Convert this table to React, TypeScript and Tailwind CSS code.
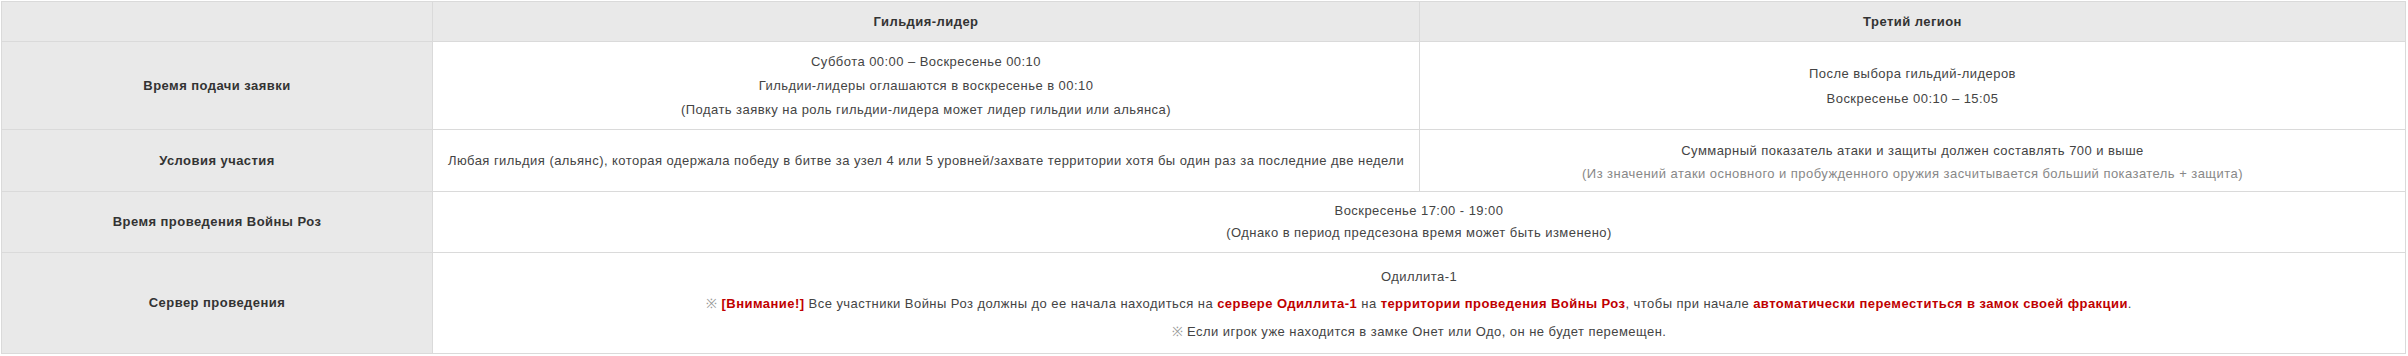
import React from "react";

const font = { fontFamily: '"Liberation Sans", Arial, sans-serif' };

function Label({ children }: { children: React.ReactNode }) {
  return (
    <div className="flex items-center justify-center border-l border-t border-[#dadada] bg-[#e9e9e9] text-[13px] font-bold tracking-[0.45px] text-[#333]">
      {children}
    </div>
  );
}

function Cell({
  children,
  className = "",
}: {
  children: React.ReactNode;
  className?: string;
}) {
  return (
    <div
      className={`flex flex-col items-center justify-center border-l border-t border-[#dadada] bg-white text-center text-[13px] tracking-[0.45px] text-[#444] ${className}`}
    >
      {children}
    </div>
  );
}

const R = ({ children }: { children: React.ReactNode }) => (
  <b className="font-bold text-[#c00000]">{children}</b>
);

export default function App() {
  return (
    <div className="min-h-[356px] w-[2408px] bg-white pl-px pt-px" style={font}>
      <div className="grid w-[2405px] grid-cols-[431px_987px_986px] grid-rows-[40px_88px_62px_61px_101px] border-b border-r border-[#dadada]">
        {/* header */}
        <Label>{""}</Label>
        <Label>Гильдия-лидер</Label>
        <Label>Третий легион</Label>

        {/* row 1 */}
        <Label>Время подачи заявки</Label>
        <Cell className="leading-[24px]">
          <div>Суббота 00:00 – Воскресенье 00:10</div>
          <div>Гильдии-лидеры оглашаются в воскресенье в 00:10</div>
          <div>(Подать заявку на роль гильдии-лидера может лидер гильдии или альянса)</div>
        </Cell>
        <Cell className="leading-[25px]">
          <div>После выбора гильдий-лидеров</div>
          <div>Воскресенье 00:10 – 15:05</div>
        </Cell>

        {/* row 2 */}
        <Label>Условия участия</Label>
        <Cell>
          <div>
            Любая гильдия (альянс), которая одержала победу в битве за узел 4 или 5 уровней/захвате территории хотя бы один раз за последние две недели
          </div>
        </Cell>
        <Cell className="pt-[2px] leading-[23px]">
          <div>Суммарный показатель атаки и защиты должен составлять 700 и выше</div>
          <div className="text-[#888]">
            (Из значений атаки основного и пробужденного оружия засчитывается больший показатель + защита)
          </div>
        </Cell>

        {/* row 3 */}
        <Label>Время проведения Войны Роз</Label>
        <Cell className="col-span-2 leading-[22px]">
          <div>Воскресенье 17:00 - 19:00</div>
          <div>(Однако в период предсезона время может быть изменено)</div>
        </Cell>

        {/* row 4 */}
        <Label>Сервер проведения</Label>
        <Cell className="col-span-2 pt-[2px] leading-[27.5px]">
          <div>Одиллита-1</div>
          <div>
            <span className="text-[#999]">※</span> <R>[Внимание!]</R> Все участники Войны Роз должны до ее начала находиться на{" "}
            <R>сервере Одиллита-1</R> на <R>территории проведения Войны Роз</R>, чтобы при начале{" "}
            <R>автоматически переместиться в замок своей фракции</R>.
          </div>
          <div>
            <span className="text-[#999]">※</span> Если игрок уже находится в замке Онет или Одо, он не будет перемещен.
          </div>
        </Cell>
      </div>
    </div>
  );
}
